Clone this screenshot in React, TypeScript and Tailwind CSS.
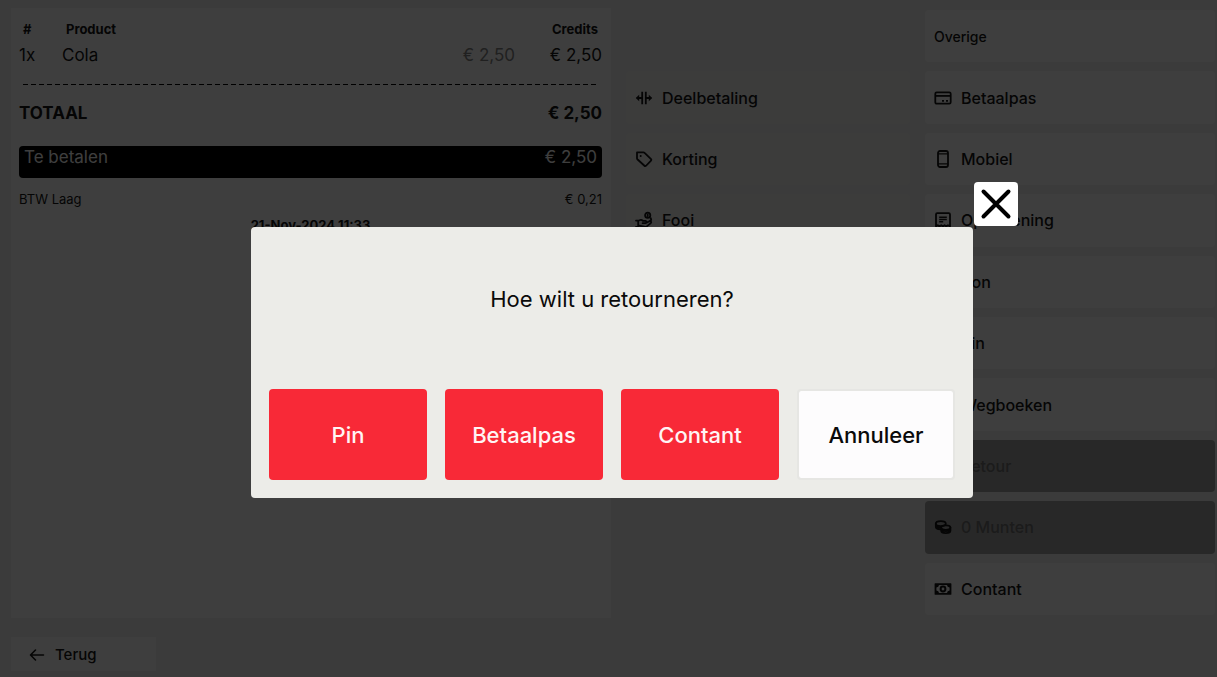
import type { ReactNode } from "react";

function Icon({ children }: { children: ReactNode }) {
  return (
    <svg
      aria-hidden="true"
      viewBox="0 0 18 18"
      className="size-[18px] shrink-0"
      fill="none"
      stroke="currentColor"
      strokeWidth="1.8"
      strokeLinecap="round"
      strokeLinejoin="round"
    >
      {children}
    </svg>
  );
}

const SplitIcon = () => (
  <Icon>
    <path d="M7.2 2.800v12.400M10.800 2.800v12.400" strokeLinecap="butt" />
    <path d="M2.500 9h4M11.500 9h4" />
    <path d="M4.200 5.800.8 9l3.400 3.200zM13.800 5.800 17.200 9l-3.400 3.200z" fill="currentColor" stroke="none" />
  </Icon>
);

const TagIcon = () => (
  <Icon>
    <path d="M2 2.4h6.4c.5 0 .9.2 1.2.5l6.2 5.9c.6.6.6 1.4 0 2l-4.500 4.700c-.6.6-1.500.6-2.100 0L2.600 9.500c-.4-.4-.6-.8-.6-1.300z" />
    <circle cx="5.700" cy="6" r="1" fill="currentColor" stroke="none" />
  </Icon>
);

const HandCoinsIcon = () => (
  <Icon>
    <circle cx="12.700" cy="4.300" r="2.600" />
    <path d="M12.700 3.500v1.600M15.800 7.200l.4 1.600-1.200 1.200" />
    <path d="M1 9.600h2.200v6.200H1M3.200 10.200c1.700-1.600 3.300-1.600 4.700-.4l2.600.1c1.300.2 1.300 2.200 0 2.300H7.600M10.800 12l3.600-1.700c1.300-.5 2.400.8 1.400 1.800l-3.600 3c-1 .8-2 .9-3.200.6l-5.800-1.200" />
  </Icon>
);

const CardIcon = () => (
  <Icon>
    <rect x="1.300" y="3.300" width="15.400" height="11.400" rx="1.400" />
    <path d="M1.300 6.900h15.400" strokeLinecap="butt" />
    <path d="M8 11.900h2M12 11.900h2" strokeLinecap="butt" />
  </Icon>
);

const PhoneIcon = () => (
  <Icon>
    <rect x="4" y="1" width="10" height="16" rx="2" />
    <path d="M4 3.900h10M4 13.900h10" strokeWidth="1.400" strokeLinecap="butt" />
  </Icon>
);

const BillIcon = () => (
  <Icon>
    <path d="M2 3.400c0-.8.5-1.200 1.200-1.200h11.600c.8 0 1.200.5 1.200 1.200v12l-2-1.200-1.700 1.200-1.700-1.200-1.700 1.200-1.700-1.200-1.700 1.200-1.700-1.200L2 15.400z" />
    <path d="M5.200 6.200h7.600M5.200 8.500h7.600M5.200 10.800h4" strokeWidth="1.400" strokeLinecap="butt" />
  </Icon>
);

const CoinsIcon = () => (
  <Icon>
    <ellipse cx="6.800" cy="5.600" rx="5" ry="2.500" />
    <path d="M1.800 5.600v3.200c0 1.400 2 2.500 4.600 2.600M1.800 8c1 1 2.600 1.500 4.600 1.400" />
    <ellipse cx="11.800" cy="9.600" rx="4.600" ry="2.300" />
    <path d="M7.200 9.600v3.200c0 1.300 2 2.300 4.600 2.300s4.600-1 4.600-2.300V9.600M7.800 12.200c2 1.200 6 1.200 8 0" />
  </Icon>
);

const CashIcon = () => (
  <Icon>
    <path
      fill="currentColor"
      stroke="none"
      fillRule="evenodd"
      d="M1.200 3.200h15.600c.3 0 .6.300.6.600v10.400c0 .3-.3.600-.6.600H1.200c-.3 0-.6-.3-.6-.6V3.800c0-.3.300-.6.600-.6zM5 5A2.800 2.800 0 0 1 2.400 7.600v2.800A2.800 2.800 0 0 1 5 13h8a2.800 2.800 0 0 1 2.600-2.600V7.600A2.800 2.800 0 0 1 13 5z"
    />
    <circle cx="9" cy="9" r="2.400" strokeWidth="2" />
  </Icon>
);

const TicketIcon = () => (
  <Icon>
    <path d="M1.500 4h15v3.200a1.800 1.800 0 0 0 0 3.600V14h-15v-3.200a1.800 1.800 0 0 0 0-3.600z" />
  </Icon>
);

const BookIcon = () => (
  <Icon>
    <path d="M3 2.500h12v13H3zM6 6h6M6 9h6" />
  </Icon>
);

const ReturnIcon = () => (
  <Icon>
    <path d="M6 3 2.500 6.500 6 10M3 6.500h8a4 4 0 0 1 0 8H6" />
  </Icon>
);

type Action = { label: string; icon: ReactNode; disabled?: boolean };

const extras: Action[] = [
  { label: "Deelbetaling", icon: <SplitIcon /> },
  { label: "Korting", icon: <TagIcon /> },
  { label: "Fooi", icon: <HandCoinsIcon /> },
];

const methods: Action[] = [
  { label: "Betaalpas", icon: <CardIcon /> },
  { label: "Mobiel", icon: <PhoneIcon /> },
  { label: "Op rekening", icon: <BillIcon /> },
  { label: "Bon", icon: <TicketIcon /> },
  { label: "Pin", icon: <CardIcon /> },
  { label: "Wegboeken", icon: <BookIcon /> },
  { label: "Retour", icon: <ReturnIcon />, disabled: true },
  { label: "0 Munten", icon: <CoinsIcon />, disabled: true },
  { label: "Contant", icon: <CashIcon /> },
];

function MethodButton({ label, icon, disabled }: Action) {
  return (
    <button
      type="button"
      disabled={disabled}
      className="flex items-center gap-[9px] rounded-sm bg-[#f8f8f7] px-[9px] text-left text-base font-medium disabled:bg-[#a0a0a0]"
    >
      {icon}
      <span className={disabled ? "text-[#6c6c6c]" : ""}>{label}</span>
    </button>
  );
}

function Receipt() {
  return (
    <section className="bg-[#f8f8f7] pt-3 pr-[9px] pl-2">
      <table className="w-full">
        <thead>
          <tr className="text-[13px] leading-[18px] font-bold">
            <th className="w-[43px] pl-1 text-left">#</th>
            <th className="pl-1 text-left">Product</th>
            <th />
            <th className="w-[87px] pr-1 text-right">Credits</th>
          </tr>
        </thead>
        <tbody>
          <tr className="text-[17px] leading-6">
            <td className="pt-[5px]">1x</td>
            <td className="pt-[5px]">Cola</td>
            <td className="pt-[5px] text-right text-[#808080]">€ 2,50</td>
            <td className="pt-[5px] text-right">€ 2,50</td>
          </tr>
        </tbody>
      </table>
      <div className="mx-1 mt-[17px] h-px bg-[repeating-linear-gradient(to_right,#000_0_5px,transparent_5px_8px)]" />
      <div className="mt-4 flex justify-between text-[17px] leading-6 font-bold">
        <span>TOTAAL</span>
        <span>€ 2,50</span>
      </div>
      <div className="mt-[21px] flex h-8 justify-between rounded-sm bg-black px-[5px] text-[17px] leading-[22px] text-[#f8f8f7]">
        <span>Te betalen</span>
        <span>€ 2,50</span>
      </div>
      <div className="mt-[11px] flex justify-between text-[13px] leading-5">
        <span>BTW Laag</span>
        <span>€ 0,21</span>
      </div>
      <p className="mt-1.5 text-center text-[13px] leading-5 font-bold">21-Nov-2024 11:33</p>
    </section>
  );
}

const refundOptions = ["Pin", "Betaalpas", "Contant"];

function RefundDialog() {
  return (
    <div className="fixed inset-0 flex items-center justify-center bg-black/75 pt-12 pl-[7px]">
      <div
        role="dialog"
        aria-modal="true"
        aria-labelledby="refund-title"
        className="relative w-full max-w-[722px] rounded bg-[#ecece8] px-[18px] pt-[58px] pb-[18px] text-[#0a0a0a]"
      >
        <button
          type="button"
          aria-label="Sluiten"
          className="absolute bottom-full left-full mb-px ml-px flex size-11 items-center justify-center rounded bg-white"
        >
          <svg aria-hidden="true" viewBox="0 0 32 32" className="size-8" stroke="#000" strokeWidth="4" strokeLinecap="round">
            <path d="M3.500 3.500l25 25M28.500 3.500l-25 25" />
          </svg>
        </button>
        <h2 id="refund-title" className="mb-[76px] text-center text-[22px] leading-7">
          Hoe wilt u retourneren?
        </h2>
        <div className="grid grid-cols-4 gap-[18px] text-[22px] font-medium">
          {refundOptions.map((option) => (
            <button key={option} type="button" className="h-[91px] rounded-sm bg-[#f82937] pt-0.5 text-[#fff4f4]">
              {option}
            </button>
          ))}
          <button
            type="button"
            className="h-[91px] rounded border-2 border-[#e6e6e3] bg-[#fdfcfd] bg-clip-padding pt-0.5"
          >
            Annuleer
          </button>
        </div>
      </div>
    </div>
  );
}

export default function App() {
  return (
    <div className="flex min-h-screen flex-col bg-[#ebebea] pt-2 pr-0.5 pb-1.5 pl-[11px] font-['Inter',sans-serif] text-[#141414]">
      <main className="grid flex-1 grid-cols-[minmax(0,600fr)_minmax(0,284fr)_minmax(0,290fr)] gap-[15px]">
        <Receipt />
        <div className="grid grid-rows-10 gap-[9px] pt-0.5 pb-[3px]">
          <span />
          {extras.map((action) => (
            <button
              key={action.label}
              type="button"
              className="flex items-center gap-[9px] rounded-sm bg-[#ededec] px-[9px] text-left text-base font-medium"
            >
              {action.icon}
              {action.label}
            </button>
          ))}
        </div>
        <div className="grid grid-rows-10 gap-[9px] pt-0.5 pb-[3px]">
          <button type="button" className="rounded-sm bg-[#f8f8f7] px-[9px] pt-0.5 text-left text-sm font-medium">
            Overige
          </button>
          {methods.map((method) => (
            <MethodButton key={method.label} {...method} />
          ))}
        </div>
      </main>
      <footer className="mt-[19px]">
        <button
          type="button"
          className="flex h-[34px] w-[145px] items-center gap-2.5 bg-[#f8f8f7] pt-0.5 pl-[18px] text-[15px] font-medium"
        >
          <svg
            aria-hidden="true"
            viewBox="0 0 16 16"
            className="size-4"
            fill="none"
            stroke="currentColor"
            strokeWidth="1.600"
            strokeLinecap="round"
            strokeLinejoin="round"
          >
            <path d="M14.500 8H2M6.500 3 1.500 8l5 5" />
          </svg>
          Terug
        </button>
      </footer>
      <RefundDialog />
    </div>
  );
}
